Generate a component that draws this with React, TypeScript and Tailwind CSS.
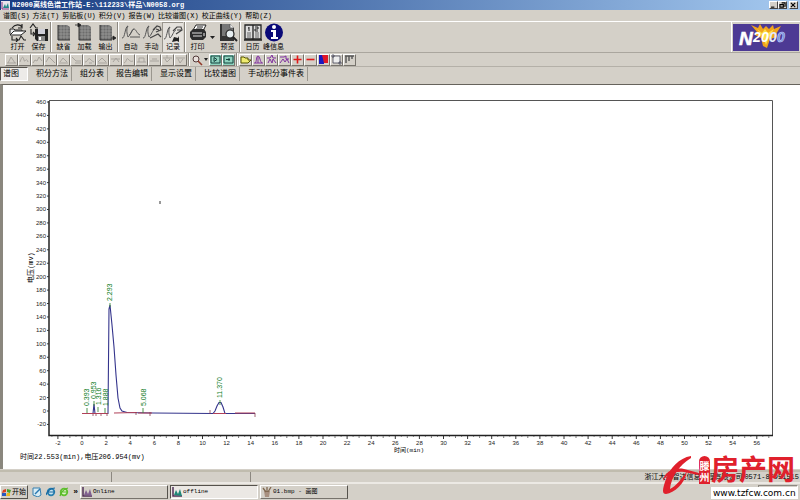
import React from "react";

type Tool = { label: string; icon: React.ReactNode; active?: boolean; drop?: boolean };

const Sheet = () => (
  <>
    <path d="M4 2h9l3 2v13H4z" fill="#6c6c6c" />
    <path d="M4 5h12M4 8h12M4 11h12M4 14h12M7 2v15M10 2v15M13 2v15" stroke="#aaa8a4" strokeWidth="0.6" />
    <path d="M4 2v15h12" stroke="#333" strokeWidth="1" fill="none" />
  </>
);

const Wave = () => (
  <path d="M1 15c3 1 3-12 6-12-2 3-1 8 0 11M7 14c2-1 4-8 6-8" stroke="#555" strokeWidth="1" fill="none" />
);

const groups: Tool[][] = [
  [
    {
      label: "打开",
      icon: (
        <>
          <path d="M4 5c3-4 8-4 10-1M14 1v4h-4" stroke="#222" fill="none" strokeWidth="1.2" />
          <path d="M2 11V6h4l1 1h7v3" stroke="#222" fill="#eee" />
          <path d="M2 12l4-4h12l-5 4z" fill="#fff" stroke="#222" />
          <path d="M4 13v4h6M8 15l2 2-2 2M10 17h1l2-4 3 4h2" stroke="#222" fill="none" strokeWidth="1.1" />
        </>
      ),
    },
    {
      label: "保存",
      icon: (
        <>
          <path d="M1 5l3-4 3 4h2M2 6v5h3M4 9l2 2-2 2" stroke="#222" fill="none" strokeWidth="1.1" />
          <path d="M6 6h13v12H8l-2-2z" fill="#222" />
          <path d="M9 6h7v5H9z" fill="#cfcfd8" />
          <path d="M9 13h7v5H9z" fill="#888" />
          <path d="M10 14h2v3h-2z" fill="#fff" />
        </>
      ),
    },
  ],
  [
    { label: "缺省", icon: <Sheet /> },
    {
      label: "加载",
      icon: (
        <>
          <Sheet />
          <path d="M0 2h4M3 0l3 2-3 2z" stroke="#222" fill="#222" strokeWidth="0.8" />
        </>
      ),
    },
    {
      label: "输出",
      icon: (
        <>
          <Sheet />
          <path d="M15 15h2M17 13l3 2-3 2z" stroke="#222" fill="#222" strokeWidth="0.8" />
        </>
      ),
    },
  ],
  [
    {
      label: "自动",
      icon: (
        <>
          <Wave />
          <path d="M8 12c2 0 3-6 5-6s3 5 6 6M9 14h10" stroke="#555" fill="none" />
        </>
      ),
    },
    {
      label: "手动",
      icon: (
        <>
          <Wave />
          <path d="M11 7l4-4 3 1 1 3-5 2M14 6l3 1M8 15l8-4 3 3" stroke="#444" fill="none" strokeWidth="1.2" />
        </>
      ),
    },
    {
      label: "记录",
      active: true,
      icon: (
        <>
          <Wave />
          <path d="M10 7l4-4h4l1 3-6 4M14 6h4" stroke="#444" fill="none" strokeWidth="1.2" />
          <path d="M11 13l4 1 1-2v6l-2-1-5 1z" fill="#222" />
        </>
      ),
    },
  ],
  [
    {
      label: "打印",
      drop: true,
      icon: (
        <>
          <path d="M5 7l3-5h10l-3 6z" fill="#fff" stroke="#222" />
          <path d="M9 4h6M8 6h6" stroke="#222" />
          <path d="M2 9l3-3h11l2 3v5l-3 3H4l-2-3z" fill="#2c2c2c" />
          <path d="M4 10h10M5 13h9M16 10v3" stroke="#ddd" strokeWidth="1.1" />
        </>
      ),
    },
    {
      label: "预览",
      icon: (
        <>
          <path d="M2 1h10l4 4v13H2z" fill="#333" />
          <path d="M4 1h8l3 4v8H4z" fill="#777" />
          <path d="M12 1v4h4" fill="#eee" stroke="#444" strokeWidth="0.6" />
          <circle cx="12" cy="11" r="4" fill="#e6edf0" stroke="#222" strokeWidth="1.2" />
          <path d="M15 14l4 4" stroke="#222" strokeWidth="2" />
        </>
      ),
    },
  ],
  [
    {
      label: "日历",
      icon: (
        <>
          <path d="M2 2h16v14H2z" fill="#ddd" stroke="#222" strokeWidth="1.3" />
          <path d="M10 2v15M1 17h18" stroke="#222" strokeWidth="1.3" />
          <path d="M6 4v4M5 5h1M12 4h3v2h-3v2h3" stroke="#222" fill="none" />
          <path d="M4 10h4M12 10h4M4 12h4M12 12h4M4 14h4M12 14h4" stroke="#666" />
        </>
      ),
    },
    {
      label: "峰信息",
      icon: (
        <>
          <circle cx="10" cy="9.5" r="9" fill="#0a0a78" />
          <circle cx="10" cy="4" r="2" fill="#fff" />
          <path d="M7 7h5v7h2v2H7v-2h2V9H7z" fill="#fff" />
        </>
      ),
    },
  ],
];

const menus: [string, string][] = [
  ["谱图", "(S)"], ["方法", "(T)"], ["剪贴板", "(U)"], ["积分", "(V)"],
  ["报告", "(W)"], ["比较谱图", "(X)"], ["校正曲线", "(Y)"], ["帮助", "(Z)"],
];

const peakTools = [
  "M1 9h9M2 9l3-6 4 6", "M1 8c2-6 3-6 4-2s2-4 4 2", "M1 9l2-3 2 1 2-4 3 4", "M1 8l3-5 3 3 3 3",
  "M1 9h9M2 8l3-4 4 4", "M1 3l4 4h5M4 9h6", "M1 8c3 0 3-5 5-3s2 2 4 3M5 9h3", "M1 8l4-4 4 4M1 9h9",
  "M1 5h9M3 8l3-4 3 4", "M1 9c3-1 2-6 4-4s3 3 5 2", "M1 8h9M3 8V4h5v4", "M1 7h9M3 5h5",
  "M1 4h9M5 1v3M3 5l2 3 3-3", "M1 4h9M3 5l2 4 3-4",
];

const colorTools: { name: string; art: React.ReactNode }[] = [
  { name: "打开谱图", art: <path d="M1 9V3h3l1 1h3v2h3L8 9z" fill="#f0ec70" stroke="#555500" /> },
  { name: "峰形", art: <path d="M1 9h9M2 9c2-1 1-7 3-7s2 6 4 7M5 2v7" stroke="#8030a0" fill="none" /> },
  { name: "峰组一", art: <path d="M1 4h3l2-3 1 3h3M2 9l2-4 2 4 1-4 3 4" stroke="#8030a0" fill="none" /> },
  { name: "峰组二", art: <path d="M1 3h4l2-1v3h3M1 9l3-4 2 3 2-3 2 4" stroke="#8030a0" fill="none" /> },
  { name: "添加", art: <path d="M5.5 1.5v8M1.5 5.5h8" stroke="#e01818" strokeWidth="1.6" /> },
  { name: "删除", art: <path d="M1.5 5.5h8" stroke="#e01818" strokeWidth="1.6" /> },
  { name: "颜色", art: <><path d="M1 1h5v9H1z" fill="#1818c0" /><path d="M4 1h6v8H6z" fill="#e01828" /></> },
  { name: "选区", art: <path d="M2 2h7v7H2zM1 1h2v2H1zM8 8h2v2H8z" stroke="#445" fill="#eee" strokeWidth="0.8" /> },
  { name: "对齐", art: <path d="M1 2h9M2 2v7M5 2v5M8 2v3" stroke="#555" strokeWidth="1.4" /> },
];

const tabs = ["积分方法", "组分表", "报告编辑", "显示设置", "比较谱图", "手动积分事件表"];

const Divider = () => <span className="mx-px h-full w-0.5 shrink-0 border-l border-[#8c8880] bg-white" />;

function SmallButton({ name, children, teal }: { name: string; children: React.ReactNode; teal?: boolean }) {
  return (
    <button
      aria-label={name}
      className={`flex h-3 w-[13px] shrink-0 items-center justify-center border border-t-white border-l-white border-r-[#77736c] border-b-[#77736c] ${teal ? "bg-[#8fd3bf]" : "bg-[#d4d0c8]"}`}
    >
      <svg className="h-[11px] w-[11px]" viewBox="0 0 11 11">{children}</svg>
    </button>
  );
}

const px = (t: number) => 82 + 12.05 * t;
const py = (v: number) => 411 - 0.6717 * v;
const xTicks = Array.from({ length: 30 }, (_, i) => -2 + i * 2);
const yTicks = Array.from({ length: 25 }, (_, i) => -20 + i * 20);
const peaks: { t: string; x: number; y: number; tick: number }[] = [
  { t: "0.393", x: 89, y: 406, tick: 87 },
  { t: "0.953", x: 96, y: 399, tick: 94 },
  { t: "1.316", x: 101, y: 405, tick: 98 },
  { t: "1.888", x: 108, y: 406, tick: 105 },
  { t: "2.293", x: 112, y: 301, tick: 110 },
  { t: "5.068", x: 146, y: 406, tick: 143 },
  { t: "11.370", x: 222, y: 398, tick: 220 },
];

function Chromatogram() {
  return (
    <svg className="block w-full" viewBox="3 85 797 368" role="img" aria-label="色谱图">
      <path d="M49 100.5H772.5V436" stroke="#555" fill="none" />
      <path d="M49 101V435.5H773" stroke="#222" strokeWidth="1.5" fill="none" />
      {yTicks.map((v) => (
        <g key={v}>
          <path d={`M47 ${py(v)}h2`} stroke="#333" />
          <text x="46" y={py(v) + 2} textAnchor="end" className="fill-[#222] text-[6px]">{v}</text>
        </g>
      ))}
      {xTicks.map((v) => (
        <g key={v}>
          <path d={`M${px(v)} 436v3`} stroke="#333" />
          <path d={`M${px(v) + 6} 436v1M${px(v) + 12} 436v2M${px(v) - 6} 436v1`} stroke="#777" />
          <text x={px(v)} y="445" textAnchor="middle" className="fill-[#222] text-[6px]">{v}</text>
        </g>
      ))}
      <text x="394" y="452" className="fill-black font-['Liberation_Mono','Noto_Sans_CJK_SC',monospace] text-[6px]">
        时间(min)
      </text>
      <text
        transform="translate(33 283) rotate(-90)"
        className="fill-black font-['Liberation_Mono','Noto_Sans_CJK_SC',monospace] text-[7px]"
      >
        电压(mv)
      </text>
      <path
        d="M82 413.5H93L94 404 95 413.5H108L109 309 110 305 112 325 114 347 116 375 118 398 120 408 122 411 127 412.5 153 413 213 413.5 215 411 217 406 219 402.5H221L223 407 225 413.5H255"
        stroke="#34348c"
        fill="none"
        strokeWidth="1.1"
      />
      <path d="M82 413.5H108M114 413L137 412.5M138 413H152M213 413.5H226M235 413H255" stroke="#b04058" fill="none" />
      <path d="M93 414v2M96 414v2M101 414v2M107 413v3M136 412v3M150 412v4M255 413v4M210 410v4" stroke="#884050" strokeWidth="0.8" />
      {peaks.map((p) => (
        <g key={p.t}>
          <path d={`M${p.tick} ${p.y + 2}v${p.tick === 110 ? 4 : 5}`} stroke="#3a8a3a" strokeWidth="0.9" />
          <text transform={`translate(${p.x} ${p.y}) rotate(-90)`} className="fill-[#0a7a1a] text-[7px]">{p.t}</text>
        </g>
      ))}
      <path d="M160 201v3" stroke="#333" />
    </svg>
  );
}

function Task({ children, icon, active }: { children: React.ReactNode; icon: React.ReactNode; active?: boolean }) {
  return (
    <button
      className={`flex h-[14px] w-[88px] items-center gap-px border px-px text-[6px] ${active ? "border-t-[#55524c] border-l-[#55524c] border-r-white border-b-white bg-[#ebe8e4]" : "border-t-white border-l-white border-r-[#55524c] border-b-[#77736c]"}`}
    >
      <svg className="h-[10px] w-[10px]" viewBox="0 0 10 10">{icon}</svg>
      {children}
    </button>
  );
}

const mono = "font-['Liberation_Mono','Noto_Sans_CJK_SC',monospace]";

const GraphIcon = ({ tint }: { tint: string }) => (
  <>
    <path d="M1 0v9h9" stroke="#503058" strokeWidth="1.5" fill="none" />
    <path d="M2 8l2-5 2 4 2-5 2 7z" fill={tint} />
  </>
);

export default function App() {
  return (
    <div className="relative flex min-h-screen flex-col overflow-hidden bg-[#d4d0c8] font-['Liberation_Sans','Noto_Sans_CJK_SC',sans-serif] text-[7px] leading-[8px] text-black">
      <header className="flex h-[10px] items-center bg-linear-to-r from-[#173a80] to-[#a6caf0] pr-0.5 pl-px text-white">
        <svg className="mr-0.5 h-[9px] w-[9px]" viewBox="0 0 9 9">
          <path d="M0 0h9v9H0z" fill="#e8e4ec" />
          <path d="M1 1v7h7" stroke="#803080" fill="none" />
          <path d="M2 7l2-4 1 3 2-4 1 5z" fill="#208888" />
        </svg>
        <h1 className={`flex-1 font-bold whitespace-nowrap ${mono}`}>
          N2000离线色谱工作站-E:\112233\样品\N0058.org
        </h1>
        {[
          ["最小化", "M1 6h4"],
          ["还原", "M3 1h4v4H6M1 3h4v3H1z"],
          ["关闭", "M1 1l5 5M6 1L1 6"],
        ].map(([name, d]) => (
          <button
            key={name}
            aria-label={name}
            className="h-2 w-[9px] border border-t-white border-l-white border-r-[#444] border-b-[#444] bg-[#d4d0c8] last:ml-0.5"
          >
            <svg className="h-full w-full" viewBox="0 0 8 7"><path d={d} stroke="#000" fill="none" strokeWidth="1.3" /></svg>
          </button>
        ))}
      </header>

      <nav className={`flex h-[11px] items-center gap-[3px] pl-[3px] ${mono}`}>
        {menus.map(([name, key]) => (
          <button key={name} className="whitespace-nowrap">
            {name}{key}
          </button>
        ))}
      </nav>

      <div className="flex h-8 items-stretch border-t border-b border-t-white border-b-[#aaa69e] pl-[7px]">
        {groups.map((group, i) => (
          <div key={i} className="flex items-stretch">
            {i > 0 && <Divider />}
            {group.map((tool) => (
              <React.Fragment key={tool.label}>
                <button
                  className={`flex w-[21px] flex-col items-center justify-between py-px whitespace-nowrap ${tool.active ? "border-t border-l border-[#9a968e] bg-[#e4e1dc]" : ""}`}
                >
                  <svg className="h-[19px] w-5 shrink-0" viewBox="0 0 20 19">{tool.icon}</svg>
                  {tool.label}
                </button>
                {tool.drop && (
                  <button aria-label="打印选项" className="flex w-[9px] items-center justify-center">
                    <svg className="h-[3px] w-[5px]" viewBox="0 0 5 3"><path d="M0 0h5L2.5 3z" fill="#222" /></svg>
                  </button>
                )}
              </React.Fragment>
            ))}
          </div>
        ))}
        <div className="ml-auto flex border-l border-white p-px">
          <svg className="h-[27px] w-[66px] self-center" viewBox="0 0 66 27" role="img" aria-label="N2000">
            <path d="M0 0h66v27H0z" fill="#4d3a94" />
            <path d="M18 1l7 3 2-4 3 5 3-3 3 3 4-4 1 4 7-3-5 8 1 3-7 2-3 9-4-2-2-8-6-3 2-3z" fill="#f2a51c" />
            <path d="M24 5l5 4 3-4 3 4 6-4-5 8-3 8-3-8z" fill="#fbe04a" />
            <text x="6" y="21" className="fill-white stroke-white text-[19px] font-bold italic" strokeWidth="0.6">N</text>
            <g className="text-[14px] font-bold italic">
              <text x="20" y="18" fill="#fff">2</text>
              <text x="28" y="18" fill="#fff">0</text>
              <text x="36" y="18" fill="#e4eafc">0</text>
              <text x="44" y="18" fill="#7088d8" stroke="#c4d4ff" strokeWidth="0.6">0</text>
            </g>
          </svg>
        </div>
      </div>

      <div className="flex h-[14px] items-center border-b border-[#b4b0a8] pl-[5px]">
        {peakTools.map((d, i) => (
          <SmallButton key={d} name={`积分工具 ${i + 1}`}>
            <path d={d} stroke="#a8a49e" fill="none" />
          </SmallButton>
        ))}
        <Divider />
        <button aria-label="缩放" className="flex w-[18px] items-center gap-px">
          <svg className="h-3 w-3" viewBox="0 0 12 12">
            <circle cx="5" cy="5" r="3" fill="#e8e0dc" stroke="#503838" />
            <path d="M7 7l4 4" stroke="#903828" strokeWidth="1.6" />
          </svg>
          <svg className="h-[3px] w-1" viewBox="0 0 4 3"><path d="M0 0h4L2 3z" fill="#222" /></svg>
        </button>
        <SmallButton name="左移" teal><path d="M1 2h9v7H1zM4 3.500v4L7 5.500z" stroke="#14403c" fill="none" /></SmallButton>
        <SmallButton name="右移" teal><path d="M1 2h9v7H1zM3 5.500h4M6 4v3" stroke="#14403c" fill="none" /></SmallButton>
        <Divider />
        {colorTools.map((tool) => (
          <SmallButton key={tool.name} name={tool.name}>{tool.art}</SmallButton>
        ))}
      </div>

      <div role="tablist" className="flex h-[17px] items-start text-[8px]">
        <button
          role="tab"
          aria-selected="true"
          className="h-[14px] w-7 border border-[#55524c] border-r-white border-b-white bg-[#edebe8] pl-0.5 text-left"
        >
          谱图
        </button>
        {tabs.map((tab) => (
          <button
            key={tab}
            role="tab"
            aria-selected="false"
            className="h-[14px] border-r border-[#9a968e] pr-[3px] pl-2 whitespace-nowrap"
          >
            {tab}
          </button>
        ))}
      </div>

      <main className="flex-1 border-t border-l-[3px] border-t-[#66635c] border-l-[#8a877e] bg-white">
        <Chromatogram />
        <p className={`pl-[17px] whitespace-nowrap ${mono}`}>时间22.553(min),电压206.954(mv)</p>
      </main>

      <div className="mt-px flex h-[14px] items-center border-t-2 border-b-2 border-t-[#c0bcae] border-b-[#ece9e4]">
        <span className="h-2.5 w-28 border-r border-[#8c8880]" />
        <span className="h-2.5 w-[139px] border-r border-[#8c8880]" />
        <span className="ml-auto pr-px whitespace-nowrap">
          浙江大学智达信息工程有限公司 <span className={mono}>0571-87951515</span>
        </span>
      </div>

      <footer className={`flex h-4 items-center gap-0.5 ${mono}`}>
        <button className="flex h-[14px] w-7 items-center gap-px border border-t-white border-l-white border-r-[#55524c] border-b-[#55524c] pl-px whitespace-nowrap">
          <svg className="h-[9px] w-[9px] shrink-0" viewBox="0 0 9 9">
            <path d="M1 2l3-1v3L0 5z" fill="#d84020" />
            <path d="M5 1l4 1-1 3-3-1z" fill="#48a030" />
            <path d="M0 5l4 0v3L0 8z" fill="#2858c0" />
            <path d="M5 5l3 0v3L4 8z" fill="#e8b820" />
          </svg>
          开始
        </button>
        <div className="flex w-12 items-center justify-between pl-0.5">
          <button aria-label="显示桌面">
            <svg className="h-[10px] w-[10px]" viewBox="0 0 10 10">
              <path d="M1 1h7l1 7-3 2-5-2z" fill="#d8ecf4" stroke="#3880b0" />
              <path d="M3 7l5-5" stroke="#2878b0" strokeWidth="1.5" />
            </svg>
          </button>
          <button aria-label="浏览器">
            <svg className="h-[10px] w-[10px]" viewBox="0 0 10 10">
              <circle cx="5" cy="5" r="3.3" fill="#c8e4f0" stroke="#2880b0" strokeWidth="1.8" />
              <path d="M2 5h7M0 8c1-4 5-7 9-7" stroke="#1868a0" fill="none" strokeWidth="1.2" />
            </svg>
          </button>
          <button aria-label="安全浏览器">
            <svg className="h-[10px] w-[10px]" viewBox="0 0 10 10">
              <circle cx="5" cy="5" r="3.3" fill="#dcf4c8" stroke="#60c030" strokeWidth="1.8" />
              <path d="M2 5h7M1 9c1-4 4-7 8-8" stroke="#58b828" fill="none" strokeWidth="1.2" />
            </svg>
          </button>
          <button className="text-[8px] font-bold">»</button>
        </div>
        <Task icon={<GraphIcon tint="#806090" />}>Online</Task>
        <Task active icon={<GraphIcon tint="#208878" />}>offline</Task>
        <Task icon={<><path d="M2 4h6l-1 6H3z" fill="#a89080" /><path d="M1 1l3 4M5 0v5M9 0L6 5" stroke="#806850" strokeWidth="1.3" /></>}>
          01.bmp - 画图
        </Task>
        <span className="mr-0.5 ml-auto h-[14px] w-10 border border-t-[#8c8880] border-l-[#8c8880] border-r-white border-b-white" />
      </footer>

      <div className="absolute right-0.5 bottom-px flex h-[43px] w-[138px] justify-end text-[#e0202c]">
        <svg className="h-full w-[37px] shrink-0 overflow-visible" viewBox="0 0 37 43">
          <path d="M29 0C17 2 8 12 4 23 0 34 0 38 4 38c8-1 19-10 21-23-6 9-11 15-17 18C9 22 17 9 29 2z" fill="#e0202c" />
          <path d="M1 25C2 16 12 11 22 13l15 4-1 2-14-3C13 15 5 18 1 25z" fill="#e0202c" />
        </svg>
        <span className="mr-px flex h-7 w-[11px] shrink-0 flex-col items-center justify-center rounded-t-full rounded-b-sm bg-[#e0202c] pt-1 text-[10px] leading-[11px] font-bold text-white">
          <span>滕</span>
          <span>州</span>
        </span>
        <div className="flex w-[87px] shrink-0 flex-col justify-between">
          <strong className="text-[28px] leading-[29px] whitespace-nowrap">房产网</strong>
          <a
            href="#top"
            className="bg-white px-0.5 font-['DejaVu_Sans',sans-serif] text-[9px] leading-[12px] whitespace-nowrap text-black"
          >
            www.tzfcw.com.cn
          </a>
        </div>
      </div>
    </div>
  );
}
